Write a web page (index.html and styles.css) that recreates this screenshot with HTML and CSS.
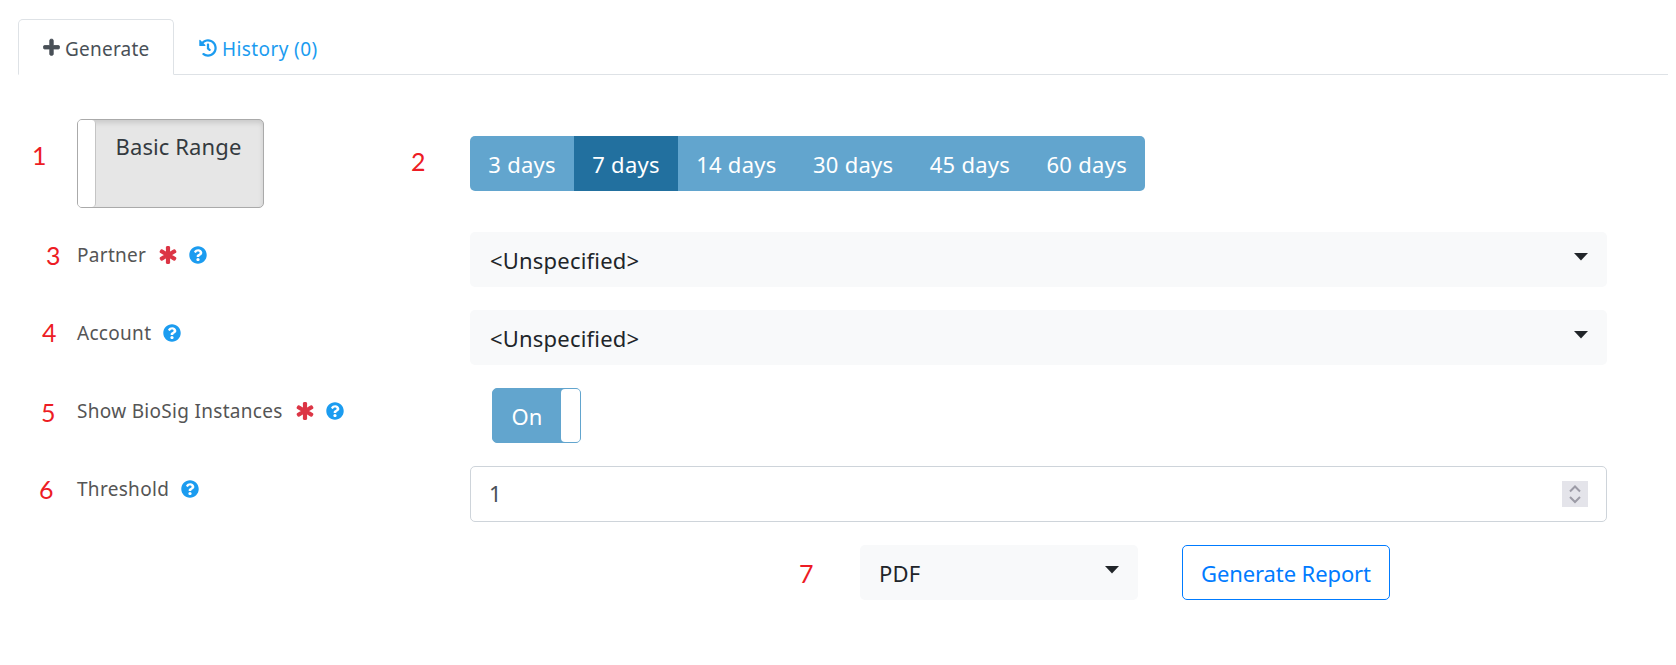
FILE: index.html
```html
<!DOCTYPE html>
<html lang="en">
<head>
<meta charset="utf-8">
<title>Generate Report</title>
<link rel="stylesheet" href="styles.css">
</head>
<body>
<svg class="defs" aria-hidden="true">
  <symbol id="i-q" viewBox="0 0 512 512"><path d="M504 256c0 136.997-111.043 248-248 248S8 392.997 8 256C8 119.083 119.043 8 256 8s248 111.083 248 248zM262.655 90c-54.497 0-89.255 22.957-116.549 63.758-3.536 5.286-2.353 12.415 2.715 16.258l34.699 26.31c5.205 3.947 12.621 3.008 16.665-2.122 17.864-22.658 30.113-35.797 57.303-35.797 20.429 0 45.698 13.148 45.698 32.958 0 14.976-12.363 22.667-32.534 33.976C247.128 238.528 216 254.941 216 296v4c0 6.627 5.373 12 12 12h56c6.627 0 12-5.373 12-12v-1.333c0-28.462 83.186-29.647 83.186-106.667 0-58.002-60.165-102-116.531-102zM256 338c-25.365 0-46 20.635-46 46 0 25.364 20.635 46 46 46s46-20.636 46-46c0-25.365-20.635-46-46-46z"/></symbol>
  <symbol id="i-a" viewBox="-20 -20 552 552"><path stroke-width="44" stroke-linejoin="round" d="M478.21 334.093L336 256l142.21-78.093c11.795-6.477 15.961-21.384 9.232-33.037l-19.48-33.741c-6.728-11.653-21.72-15.499-33.227-8.523L296 186.718l3.475-162.204C299.763 11.061 288.937 0 275.48 0h-38.96c-13.456 0-24.283 11.061-23.994 24.514L216 186.718 77.265 102.607c-11.506-6.976-26.499-3.13-33.227 8.523l-19.48 33.741c-6.728 11.653-2.562 26.56 9.233 33.037L176 256 33.79 334.093c-11.795 6.477-15.961 21.384-9.232 33.037l19.48 33.741c6.728 11.653 21.721 15.499 33.227 8.523L216 325.282l-3.475 162.204C212.237 500.939 223.064 512 236.52 512h38.961c13.456 0 24.283-11.061 23.995-24.514L296 325.282l138.735 84.111c11.506 6.976 26.499 3.13 33.227-8.523l19.48-33.741c6.729-11.653 2.563-26.56-9.232-33.037z"/></symbol>
  <symbol id="i-c" viewBox="0 0 14 8"><path d="M0 0h14L7 7.5z"/></symbol>
</svg>

<nav class="tabs">
  <a class="tab tab-active" href="#">
    <svg class="tab-icon icon-plus" viewBox="-12 0 472 512"><path stroke-width="24" stroke-linejoin="round" d="M416 208H272V64c0-17.67-14.33-32-32-32h-32c-17.67 0-32 14.33-32 32v144H32c-17.67 0-32 14.33-32 32v32c0 17.67 14.33 32 32 32h144v144c0 17.67 14.33 32 32 32h32c17.67 0 32-14.33 32-32V304h144c17.67 0 32-14.33 32-32v-32c0-17.67-14.33-32-32-32z"/></svg>
    Generate
  </a>
  <a class="tab tab-link" href="#">
    <svg class="tab-icon icon-history" viewBox="0 0 512 512"><path d="M504 255.531c.253 136.64-111.18 248.372-247.82 248.468-59.015.042-113.223-20.53-155.822-54.911-11.077-8.94-11.905-25.541-1.839-35.607l11.267-11.267c8.609-8.609 22.353-9.551 31.891-1.984C173.062 425.135 212.781 440 256 440c101.705 0 184-82.311 184-184 0-101.705-82.311-184-184-184-48.814 0-93.149 18.969-126.068 49.932l50.754 50.754c10.08 10.08 2.941 27.314-11.313 27.314H24c-8.837 0-16-7.163-16-16V38.627c0-14.254 17.234-21.393 27.314-11.314l49.372 49.372C129.209 34.136 189.552 8 256 8c136.81 0 247.747 110.78 248 247.531zm-180.912 78.784l9.823-12.63c8.138-10.463 6.253-25.542-4.21-33.679L288 256.349V152c0-13.255-10.745-24-24-24h-16c-13.255 0-24 10.745-24 24v135.651l65.409 50.874c10.463 8.137 25.541 6.253 33.679-4.21z"/></svg>
    History (0)
  </a>
</nav>

<main class="form">
  <div class="row row-range">
    <span class="mark mark-1">1</span>
    <div class="label-cell">
      <div class="range-toggle"><span class="range-handle"></span><span class="range-text">Basic Range</span></div>
    </div>
    <div class="control-cell segment-cell">
      <span class="mark mark-2">2</span>
      <div class="segments">
        <button class="seg seg-first">3 days</button>
        <button class="seg seg-active">7 days</button>
        <button class="seg">14 days</button>
        <button class="seg">30 days</button>
        <button class="seg">45 days</button>
        <button class="seg seg-last">60 days</button>
      </div>
    </div>
  </div>

  <div class="row">
    <span class="mark mark-3">3</span>
    <label class="label-cell field-label">Partner
      <svg class="icon-req"><use href="#i-a"/></svg>
      <svg class="icon-help"><use href="#i-q"/></svg>
    </label>
    <div class="control-cell select-box">
      <span>&lt;Unspecified&gt;</span>
      <svg class="caret"><use href="#i-c"/></svg>
    </div>
  </div>

  <div class="row">
    <span class="mark mark-4">4</span>
    <label class="label-cell field-label">Account
      <svg class="icon-help"><use href="#i-q"/></svg>
    </label>
    <div class="control-cell select-box">
      <span>&lt;Unspecified&gt;</span>
      <svg class="caret"><use href="#i-c"/></svg>
    </div>
  </div>

  <div class="row">
    <span class="mark mark-5">5</span>
    <label class="label-cell field-label">Show BioSig Instances
      <svg class="icon-req"><use href="#i-a"/></svg>
      <svg class="icon-help"><use href="#i-q"/></svg>
    </label>
    <div class="control-cell toggle-cell">
      <div class="toggle"><span class="toggle-text">On</span><span class="toggle-handle"></span></div>
    </div>
  </div>

  <div class="row row-number">
    <span class="mark mark-6">6</span>
    <label class="label-cell field-label">Threshold
      <svg class="icon-help"><use href="#i-q"/></svg>
    </label>
    <div class="control-cell number-box">
      <span>1</span>
      <span class="spinner">
        <svg viewBox="0 0 26 26"><path class="spin-stroke" d="M8 10.5l5-5 5 5M8 16l5 5 5-5"/></svg>
      </span>
    </div>
  </div>

  <div class="actions">
    <span class="mark mark-7">7</span>
    <div class="select-box select-format">
      <span>PDF</span>
      <svg class="caret"><use href="#i-c"/></svg>
    </div>
    <button class="generate">Generate Report</button>
  </div>
</main>
</body>
</html>
```
FILE: styles.css
```css
* { box-sizing: border-box; }
html, body { margin: 0; padding: 0; background: #fff; }
body {
  font-family: "Noto Sans", "Open Sans", sans-serif;
  color: #212529;
  width: 1676px;
  height: 665px;
  overflow: hidden;
}
.defs { position: absolute; width: 0; height: 0; }

/* tabs */
.tabs {
  display: flex;
  margin: 19px 8px 0 18px;
  height: 56px;
  border-bottom: 1px solid #dee2e6;
}
.tab {
  display: flex;
  align-items: center;
  gap: 5px;
  height: 56px;
  padding: 3px 24px 0;
  font-size: 19px;
  letter-spacing: .22px;
  color: #1b9cf0;
  text-decoration: none;
  border: 1px solid transparent;
  border-radius: 5px 5px 0 0;
  fill: #1b9cf0;
}
.tab-link { letter-spacing: .4px; }
.tab-active {
  color: #495057;
  fill: #495057;
  stroke: #495057;
  background: #fff;
  border-color: #dee2e6 #dee2e6 #fff;
  width: 156px;
}
.tab-icon { flex: none; margin-top: -2px; }
.icon-plus { width: 17px; height: 18.5px; }
.icon-history { width: 18px; height: 18px; }

/* form */
.form {
  position: relative;
  margin: 44px 69px 0 77px;
}
.row {
  position: relative;
  display: grid;
  grid-template-columns: 393px 1137px;
  align-items: start;
  height: 55px;
  margin-bottom: 23px;
}
.row-range { height: 89px; margin-bottom: 24px; }
.row-number { margin-bottom: 24px; }
.mark {
  position: absolute;
  font-family: "Lato", sans-serif;
  font-size: 25px;
  line-height: 30px;
  color: #ed1c24;
}
.mark-1 { left: -45px; top: 21px; }
.mark-2 { left: -59px; top: 27px; }
.mark-3 { left: -31px; top: 8px; }
.mark-4 { left: -35px; top: 7px; }
.mark-5 { left: -36px; top: 9px; }
.mark-6 { left: -38px; top: 8px; }
.mark-7 { left: -61px; top: 13px; }

.range-toggle {
  display: flex;
  width: 187px;
  height: 89px;
  background: #e6e6e6;
  border: 1px solid #aaa;
  border-radius: 5px;
  box-shadow: inset 0 3px 5px rgba(0, 0, 0, .12);
}
.range-handle {
  width: 18px;
  height: 87px;
  background: #fff;
  border-right: 1px solid #c4c4c4;
  border-radius: 4px;
  flex: none;
}
.range-text {
  flex: 1;
  text-align: center;
  font-size: 22px;
  letter-spacing: .1px;
  line-height: 30px;
  padding: 11px 2px 0 0;
  color: #343a40;
}

.segment-cell { position: relative; padding-top: 17px; }
.segments { display: inline-flex; height: 55px; background: #62a5ce; border-radius: 5px; }
.seg {
  font: inherit;
  font-size: 22px;
  letter-spacing: .28px;
  color: #fff;
  background: transparent;
  border: 0;
  padding: 0 18px 0 18.3px;
}
.seg-first { border-radius: 5px 0 0 5px; }
.seg-last { border-radius: 0 5px 5px 0; }
.seg-active { background: #22709f; }

.field-label {
  display: flex;
  align-items: center;
  height: 28px;
  margin-top: 9px;
  font-size: 19px;
  letter-spacing: .3px;
  color: #555;
}
.icon-req { width: 18px; height: 18px; fill: #dc3545; stroke: #dc3545; margin-left: 13px; flex: none; }
.icon-help { width: 18px; height: 18px; fill: #1b9cf0; margin-left: 12px; flex: none; }

.select-box {
  display: flex;
  align-items: center;
  justify-content: space-between;
  height: 55px;
  padding: 0 19px 0 20px;
  font-size: 22px;
  letter-spacing: .2px;
  background: #f8f9fa;
  border-radius: 5px;
}
.caret { width: 14px; height: 8px; fill: #212529; margin-top: -6px; }

.toggle-cell { padding-left: 22px; }
.toggle {
  display: flex;
  width: 89px;
  height: 55px;
  background: #62a5ce;
  border: 1px solid #62a5ce;
  border-radius: 5px;
}
.toggle-text { flex: 1; text-align: center; color: #fff; font-size: 22px; line-height: 55px; }
.toggle-handle {
  width: 19px;
  background: #fff;
  border-radius: 4px;
}

.number-box {
  display: flex;
  align-items: center;
  justify-content: space-between;
  height: 56px;
  padding: 0 18px 2px 18px;
  font-size: 22px;
  color: #495057;
  background: #fff;
  border: 1px solid #ced4da;
  border-radius: 5px;
}
.spinner { display: block; width: 26px; height: 26px; margin-top: 2px; background: #e4e4ea; }
.spinner svg { display: block; width: 26px; height: 26px; }
.spin-stroke { fill: none; stroke: #9c9ba6; stroke-width: 2; }

.actions {
  position: relative;
  display: flex;
  align-items: center;
  gap: 44px;
  margin-left: 783px;
  height: 55px;
}
.select-format { width: 278px; height: 55px; padding-left: 19px; }
.generate {
  font: inherit;
  font-size: 22px;
  letter-spacing: -.1px;
  color: #007bff;
  background: #fff;
  height: 55px;
  padding: 0 18px;
  border: 1px solid #007bff;
  border-radius: 5px;
}
```
